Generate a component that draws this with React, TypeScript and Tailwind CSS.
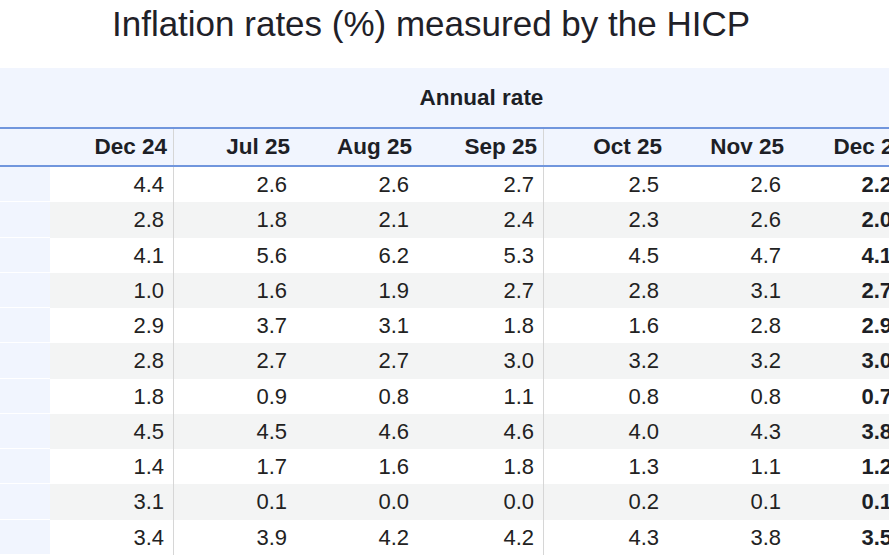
const months = ["Dec 24", "Jul 25", "Aug 25", "Sep 25", "Oct 25", "Nov 25", "Dec 25"];

const rows: string[][] = [
  ["4.4", "2.6", "2.6", "2.7", "2.5", "2.6", "2.2"],
  ["2.8", "1.8", "2.1", "2.4", "2.3", "2.6", "2.0"],
  ["4.1", "5.6", "6.2", "5.3", "4.5", "4.7", "4.1"],
  ["1.0", "1.6", "1.9", "2.7", "2.8", "3.1", "2.7"],
  ["2.9", "3.7", "3.1", "1.8", "1.6", "2.8", "2.9"],
  ["2.8", "2.7", "2.7", "3.0", "3.2", "3.2", "3.0"],
  ["1.8", "0.9", "0.8", "1.1", "0.8", "0.8", "0.7"],
  ["4.5", "4.5", "4.6", "4.6", "4.0", "4.3", "3.8"],
  ["1.4", "1.7", "1.6", "1.8", "1.3", "1.1", "1.2"],
  ["3.1", "0.1", "0.0", "0.0", "0.2", "0.1", "0.1"],
  ["3.4", "3.9", "4.2", "4.2", "4.3", "3.8", "3.5"],
];

// column widths after the label column; a divider sits after Dec 24 and Sep 25
const cols = "grid grid-cols-[50px_124px_122px_122px_126px_124px_122px_123px_60px]";
const divider = [true, false, false, true, false, false, false];

export default function App() {
  return (
    <div
      className="w-[889px] h-[555px] overflow-hidden bg-white text-[#222]"
      style={{ fontFamily: '"Liberation Sans", Arial, sans-serif' }}
    >
      <div className="w-[862px] h-[68px] pt-[4px] text-center text-[35px] leading-[40px] text-[#1f2128]">
        Inflation rates (%) measured by the HICP
      </div>

      <div className="w-[973px]">
        {/* header */}
        <div className="bg-[#f1f5fe]">
          <div className={`${cols} h-[61px] border-b-2 border-[#7196dd]`}>
            <div />
            <div className="col-span-7 text-center text-[22.5px] font-bold leading-[60px] text-[#1d1f26]">
              Annual rate
            </div>
          </div>
          <div className={`${cols} h-[38px] border-b-2 border-[#7196dd]`}>
            <div />
            {months.map((m, i) => (
              <div
                key={m}
                className={`text-right text-[22.5px] font-bold leading-[36px] text-[#1d1f26] ${
                  i === 6 ? "pr-[7px]" : "pr-[6px]"
                } ${divider[i] ? "border-r border-[#d6d6d6]" : ""}`}
              >
                {m}
              </div>
            ))}
          </div>
        </div>

        {/* body */}
        {rows.map((r, ri) => (
          <div key={ri} className={`${cols} h-[35.25px] ${ri % 2 ? "bg-[#f3f4f4]" : "bg-white"}`}>
            <div className="bg-[#f1f5fe] border-b border-white" />
            {r.map((v, i) => (
              <div
                key={i}
                className={`text-right text-[22px] leading-[35px] ${
                  i === 6 ? "pr-[21px] font-bold text-[#1d1f26]" : "pr-[9px]"
                } ${divider[i] ? "border-r border-[#d6d6d6]" : ""}`}
              >
                {v}
              </div>
            ))}
          </div>
        ))}
      </div>
    </div>
  );
}
